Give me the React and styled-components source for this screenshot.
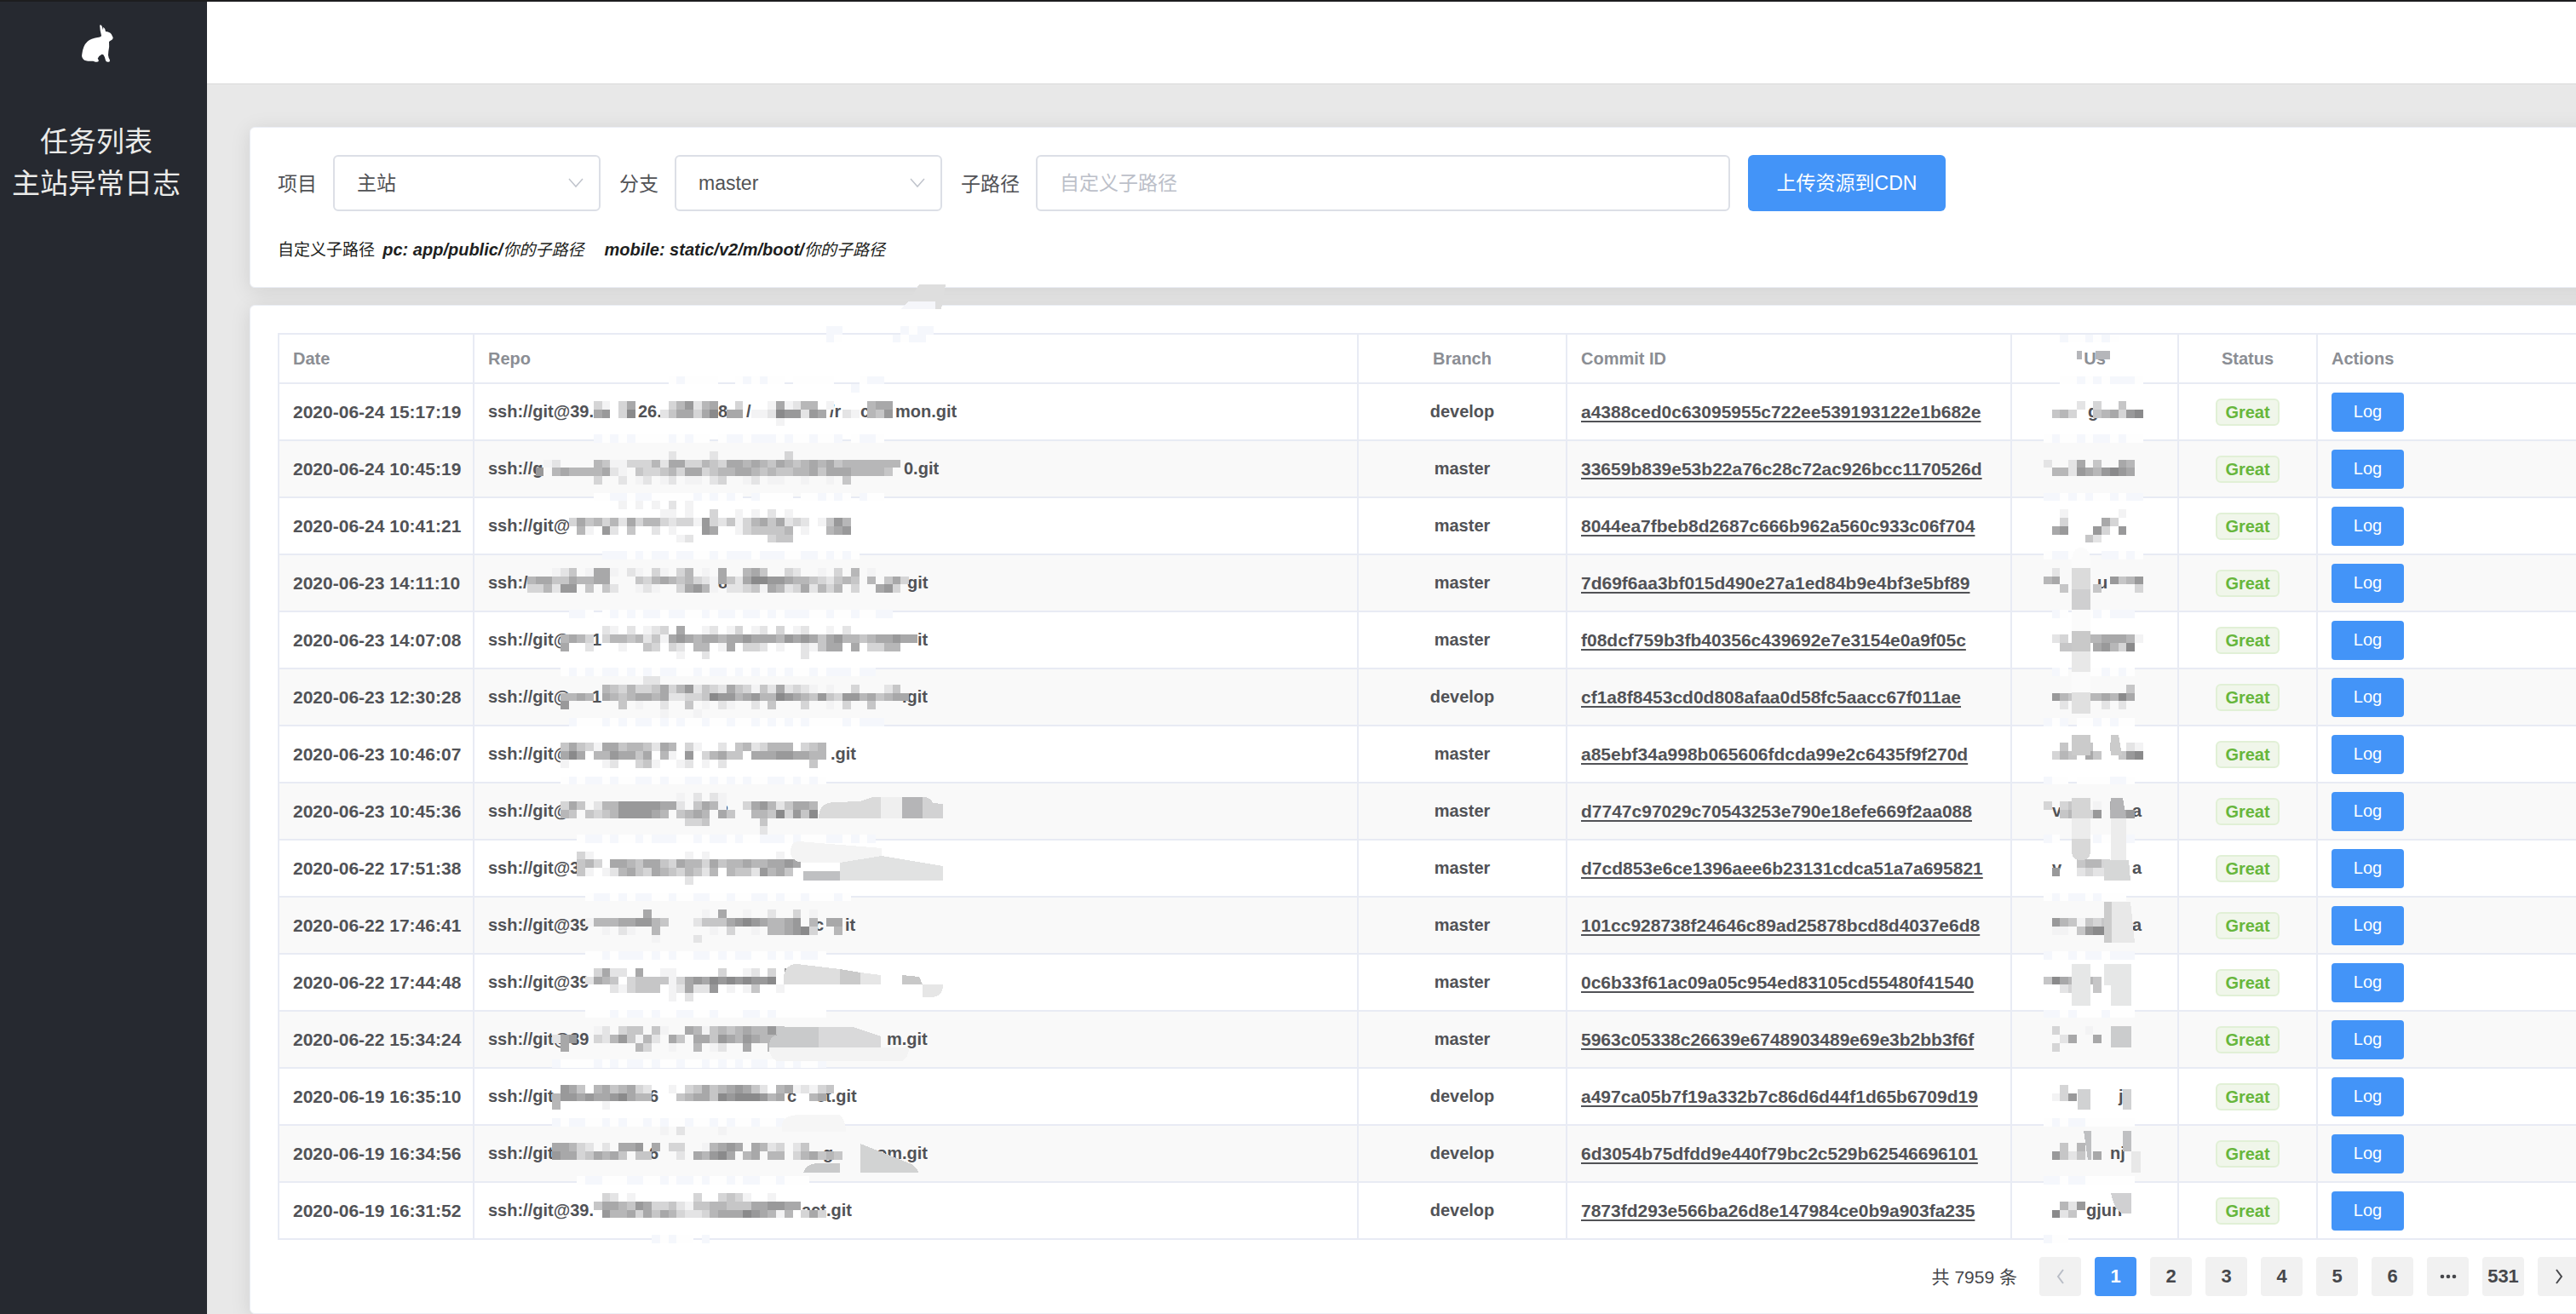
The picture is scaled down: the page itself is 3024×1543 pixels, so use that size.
import styled, { createGlobalStyle } from "styled-components";

const GlobalStyle = createGlobalStyle`
  * {
    box-sizing: border-box;
  }
  body {
    margin: 0;
    overflow-x: hidden;
    background: #e8e8e8;
    font-family: "Liberation Sans", "Noto Sans CJK SC", sans-serif;
    font-size: 20px;
    color: #515256;
  }
  button, input, select {
    font-family: inherit;
  }
`;

const Page = styled.div`
  display: flex;
  width: calc(100% + 90px);
  min-height: 100vh;
  border-top: 2px solid #1d1d1f;
`;

const Sidebar = styled.aside`
  flex: 0 0 243px;
  padding: 20px 17px 0 0;
  background: #262930;
  display: flex;
  flex-direction: column;
  align-items: center;
`;

const Menu = styled.nav`
  margin-top: 64px;
  display: flex;
  flex-direction: column;
  align-items: center;
`;

const MenuLink = styled.a`
  font-size: 33px;
  line-height: 49px;
  color: #ebebe9;
  text-decoration: none;
  white-space: nowrap;
`;

const Content = styled.div`
  flex: 1;
  min-width: 0;
`;

const Header = styled.header`
  height: 97px;
  background: #fff;
  border-bottom: 1px solid #d9d9d9;
`;

const Main = styled.main`
  padding: 50px 50px 0;
  display: flex;
  flex-direction: column;
  gap: 20px;
`;

const Card = styled.section`
  padding: 32px 32px ${(p) => p.$bottom}px;
  background: #fff;
  border: 1px solid #ebeef5;
  border-radius: 6px;
  box-shadow: 0 4px 24px rgba(0, 0, 0, 0.1);
`;

const Form = styled.form`
  display: flex;
  align-items: center;
`;

const Label = styled.label`
  margin-right: 19px;
  padding-bottom: 2px;
  font-size: 23px;
  white-space: nowrap;
`;

const SelectBox = styled.div`
  position: relative;
  width: 314px;
  margin-right: 22px;
`;

const Select = styled.select`
  appearance: none;
  width: 100%;
  height: 66px;
  padding: 0 26px;
  border: 2px solid #dcdfe6;
  border-radius: 6px;
  background: #fff;
  font-size: 23px;
  color: #515256;
`;

const Arrow = styled.svg`
  position: absolute;
  right: 18px;
  top: 26px;
  pointer-events: none;
`;

const PathInput = styled.input`
  width: 815px;
  height: 66px;
  margin-right: 21px;
  padding: 0 26px;
  border: 2px solid #dcdfe6;
  border-radius: 6px;
  font-size: 23px;
  &::placeholder {
    color: #bcc0c9;
  }
`;

const UploadButton = styled.button`
  width: 232px;
  height: 66px;
  padding: 0 0 4px;
  border: 0;
  border-radius: 6px;
  background: #4394f8;
  color: #fff;
  font-size: 23px;
`;

const Hint = styled.p`
  margin: 33px 0 0;
  font-size: 19px;
  line-height: 24px;
  color: #1d1e20;
  em {
    margin: 0 20px 0 4px;
  }
  b {
    font-size: 20px;
  }
`;

const TableWrap = styled.div`
  position: relative;
`;

const Table = styled.table`
  width: 100%;
  table-layout: fixed;
  border-collapse: separate;
  border-spacing: 0;
  border: solid #e8ebf4;
  border-width: 2px 0 0 2px;
`;

const Th = styled.th`
  width: ${(p) => p.$w};
  height: 58px;
  padding: 0 16px;
  border: solid #e8ebf4;
  border-width: 0 2px 2px 0;
  text-align: ${(p) => p.$align || "left"};
  color: #8b8e94;
`;

const Row = styled.tr`
  background: ${(p) => (p.$striped ? "#f9f9f9" : "#fff")};
`;

const Td = styled.td`
  height: 67px;
  padding: 0 16px;
  border: solid #e8ebf4;
  border-width: 0 2px 2px 0;
  text-align: ${(p) => p.$align || "left"};
  font-weight: bold;
  white-space: nowrap;
`;

const Parts = styled.div`
  display: flex;
`;

const Part = styled.span`
  flex: 0 0 ${(p) => (p.$w ? `${p.$w}px` : "auto")};
`;

const Mono = styled.span`
  font-size: 21px;
`;

const Commit = styled.a`
  font-size: 21px;
  color: inherit;
  text-underline-offset: 3px;
`;

const Tag = styled.span`
  display: inline-block;
  padding: 0 9px;
  border: 2px solid #e1f0d6;
  border-radius: 6px;
  background: #f0f6ea;
  line-height: 28px;
  color: #67b63c;
`;

const LogButton = styled.button`
  display: block;
  width: 85px;
  height: 46px;
  border: 0;
  border-radius: 4px;
  background: #4394f8;
  color: #fff;
  font-size: 20px;
`;

const Pixels = styled.svg`
  position: absolute;
  top: 0;
  ${(p) => (p.$right ? `right: ${p.$right}px;` : `left: ${p.$left}px;`)}
  pointer-events: none;
`;

const Pagination = styled.div`
  margin-top: 20px;
  padding-right: 3px;
  display: flex;
  justify-content: flex-end;
  align-items: center;
  gap: 16px;
`;

const Total = styled.span`
  margin-right: 10px;
  padding-bottom: 2px;
  font-size: 21px;
  color: #46474b;
`;

const PageButton = styled.button`
  width: 49px;
  height: 46px;
  padding: 0;
  display: flex;
  align-items: center;
  justify-content: center;
  border: 0;
  border-radius: 4px;
  background: ${(p) => (p.$active ? "#4394f8" : "#f1f1f1")};
  color: ${(p) => (p.$active ? "#fff" : "#46474b")};
  font-size: 22px;
  font-weight: bold;
`;

// repo and user are lists of [text, width], the width leaves room for masked parts
const rows = [
  { date: "2020-06-24 15:17:19", repo: [["ssh://git@39.", 176], ["26.", 94], ["8", 33], ["/", 98], ["/r", 36], ["c", 41], ["mon.git"]], branch: "develop", commit: "a4388ced0c63095955c722ee539193122e1b682e", user: [["", 73], ["g"]] },
  { date: "2020-06-24 10:45:19", repo: [["ssh://g", 488], ["0.git"]], branch: "master", commit: "33659b839e53b22a76c28c72ac926bcc1170526d", user: [] },
  { date: "2020-06-24 10:41:21", repo: [["ssh://git@"]], branch: "master", commit: "8044ea7fbeb8d2687c666b962a560c933c06f704", user: [] },
  { date: "2020-06-23 14:11:10", repo: [["ssh:/", 270], ["8", 222], ["git"]], branch: "master", commit: "7d69f6aa3bf015d490e27a1ed84b9e4bf3e5bf89", user: [["", 84], ["u"]] },
  { date: "2020-06-23 14:07:08", repo: [["ssh://git@", 122], ["1", 382], ["it"]], branch: "master", commit: "f08dcf759b3fb40356c439692e7e3154e0a9f05c", user: [] },
  { date: "2020-06-23 12:30:28", repo: [["ssh://git@", 122], ["1", 364], [".git"]], branch: "develop", commit: "cf1a8f8453cd0d808afaa0d58fc5aacc67f011ae", user: [] },
  { date: "2020-06-23 10:46:07", repo: [["ssh://git@", 402], [".git"]], branch: "master", commit: "a85ebf34a998b065606fdcda99e2c6435f9f270d", user: [] },
  { date: "2020-06-23 10:45:36", repo: [["ssh://git@", 270], ["?"]], branch: "master", commit: "d7747c97029c70543253e790e18efe669f2aa088", user: [["", 31], ["v", 94], ["a"]] },
  { date: "2020-06-22 17:51:38", repo: [["ssh://git@3"]], branch: "master", commit: "d7cd853e6ce1396aee6b23131cdca51a7a695821", user: [["", 31], ["v", 94], ["a"]] },
  { date: "2020-06-22 17:46:41", repo: [["ssh://git@39", 383], ["c", 36], ["it"]], branch: "master", commit: "101cc928738f24646c89ad25878bcd8d4037e6d8", user: [["", 125], ["a"]] },
  { date: "2020-06-22 17:44:48", repo: [["ssh://git@39"]], branch: "master", commit: "0c6b33f61ac09a05c954ed83105cd55480f41540", user: [] },
  { date: "2020-06-22 15:34:24", repo: [["ssh://git@39", 468], ["m.git"]], branch: "master", commit: "5963c05338c26639e6748903489e69e3b2bb3f6f", user: [] },
  { date: "2020-06-19 16:35:10", repo: [["ssh://git", 189], ["6", 162], ["c", 34], ["ct.git"]], branch: "develop", commit: "a497ca05b7f19a332b7c86d6d44f1d65b6709d19", user: [["", 109], ["j"]] },
  { date: "2020-06-19 16:34:56", repo: [["ssh://git", 189], ["6", 204], ["g", 63], ["om.git"]], branch: "develop", commit: "6d3054b75dfdd9e440f79bc2c529b62546696101", user: [["", 99], ["nj"]] },
  { date: "2020-06-19 16:31:52", repo: [["ssh://git@39.", 368], ["act.git"]], branch: "develop", commit: "7873fd293e566ba26d8e147984ce0b9a903fa235", user: [["", 71], ["gjun"]] },
];

// [row, column, cells]: 1-9 is how dark a cell is, w white, h pale blue, . clear
const repoPixels = [
  [-9, 36, "hh.......hwhh"],
  [-8, 36, "hw......hwhh"],
  [-3, 17, "whwwww..whwhww.wwwww...whh"],
  [-2, 39, "h"],
  [0, 8, "31.36....357256..3...161255.1....566"],
  [1, 8, "67.38...2466368.66.112877276..21.547"],
  [2, 30, "1"],
  [4, 8, "hwhwhwwwwhwhww.whhwhhhwhwwhwwh.whhw"],
  [6, 17, "2....2........3"],
  [7, 2, "12....5411333526633543665654654565645555555"],
  [8, 1, "7.565555621.4334536634556654544556466655554"],
  [9, 8, "3..2.12.12.11.23..12.11..1..1.4"],
  [11, 8, "wwhhwhhwwwwwhwhwhw.hwwww.wwhwhw.hww"],
  [12, 11, "1.1.1.2.1"],
  [13, 16, "11.1..3..1.1.2.1"],
  [14, 5, "36453526355323317324135646232.1475"],
  [15, 5, ".51.72.4..2.1...76..1344445.1..567"],
  [16, 18, "12.........344"],
  [18, 9, "hhhwhwhhwhhwwhwhhhwhhhwwhhwhwhw"],
  [20, 3, "124.1661.21.31.35.1.6..564..32..1.3.5.1"],
  [21, 0, "5664465566...435654532164268877655432454.5.463"],
  [22, 0, "335277.4.42..121..36751.22341652362535.3..673"],
  [25, 5, "hhw.whwhwhhwhhwwhwhhwhhwhwhhhwwhwwhwwhh"],
  [27, 9, "21.2.123.6..12.13.12.3.12..1.2"],
  [28, 4, "5653.35545241676566566766657676467554566766"],
  [29, 4, "6..2...1..43.32.55.16.332.1..21466.6.3355"],
  [30, 18, "1..2...........2"],
  [32, 4, "whwhwhhwhwhwhhwwhwhhwhwhwhwhwwhwhhhwhh"],
  [33, 14, "22"],
  [34, 9, "54353346357243264314262321.1..3...24"],
  [35, 4, "5565.6545665622334877567558765474377564566"],
  [36, 4, "7......4.1..2..4.1.21..2.4...3..1.3..4"],
  [37, 16, "1...1"],
  [38, 5, "hwwwhwhwhhwhwhwwhwwhwwhwhwhwhwwwwhwhhh"],
  [41, 4, "46431664554265.31..2.4523555.345"],
  [42, 4, "686.5576646.51.7.35644.666776655"],
  [43, 4, "1....12..341..12.1.2..........4"],
  [45, 4, "whwhhwhwwhhwhwwhhwhwhwhwwhhwhwhw"],
  [47, 18, "1.2.21"],
  [48, 4, "364.25577777662.4651..367524665"],
  [49, 4, "54.4345777765.4565.64..55483748"],
  [50, 19, "334......4"],
  [51, 28, "2"],
  [52, 6, "whhwhwwhwhhhwwhwhhwhwwhhhwhwwwhhwhwh"],
  [54, 6, "31...........1.1........1...3.3"],
  [55, 6, "453.66546643655364556556676"],
  [56, 6, "41.12564365435425.54427564."],
  [57, 19, "2"],
  [59, 7, "whhwhwhhwwhwwhhwwhwwhhwhwwhwwwhw"],
  [61, 14, "6......1.6..1..2..3.1"],
  [62, 7, "1555667754...2444678765567.5.66"],
  [63, 9, "1.21..5......1.3..1.556783..5"],
  [64, 15, "1....2"],
  [66, 7, "wwhwhhhwhwhwwhhwhwhhwwhwhwhhw"],
  [68, 8, "3622.6..11.....3..12.3.721.4"],
  [69, 7, "2654.344441367687878778."],
  [70, 10, "213444.126227.1.14..1"],
  [71, 17, "1.2"],
  [73, 7, "wwwhwhhwhwwhhwwhwwwhhwhwwwwww"],
  [75, 8, "12.344.41..651454565574"],
  [76, 3, "267..32574152.64.664765765566"],
  [77, 4, "6........53..1..5.12..6..5.5"],
  [79, 3, "hwwwwhwhwhhwhwwhwwhwhwhwhhwhwhwwh"],
  [82, 4, "764.5645632..1.3464567642.5612134"],
  [83, 3, "577676678655...4566487888756...56"],
  [84, 3, "5.....1"],
  [86, 3, "hwhhwwhwhwwhwhwwhwwhwhwwhwwhwhwwh"],
  [87, 16, "1.2....1"],
  [89, 3, "66532.2.667.6.33..15676.6523.24"],
  [90, 3, "766346564.44...2.65786.56.55.356454"],
  [93, 6, "whhwwwhhwwhwhhwhwwhwhhwwhwww"],
  [95, 9, "32.1.......3..3431..1"],
  [96, 8, "4665476334214455444667766"],
  [97, 9, "75563646532235666876515.363"],
  [100, 15, "hwhww.h"],
];

const userPixels = [
  [-8, 2, "hwwhwhw"],
  [-3, 2, "wwhwhwhhhw"],
  [0, 4, "2.3..4"],
  [1, 1, "453..456378"],
  [4, 0, "whwwhwhhwhww"],
  [7, 0, "2..26.4..65"],
  [8, 1, "5527657876"],
  [11, 0, "hhwhwhwwhwhh"],
  [13, 2, "1......1"],
  [14, 2, "3....63"],
  [15, 1, "67...73.7"],
  [16, 5, "42"],
  [18, 0, "whhww..hhwhw"],
  [20, 1, "2"],
  [21, 0, "56......7457"],
  [22, 2, "4...4....3"],
  [25, 1, "hw.wwhwhhh"],
  [28, 1, "23..5566651"],
  [29, 2, "44..67538"],
  [32, 1, "hw..wwhwhw"],
  [34, 10, "4"],
  [35, 1, "7545556586"],
  [36, 2, "2....2.2"],
  [38, 0, "hwh.wwhwhww"],
  [41, 2, "4..4..4.21"],
  [42, 1, "354.64..478"],
  [45, 0, "hww.wwwwhhw"],
  [48, 0, "3.34..1.6"],
  [49, 2, "45.37.567"],
  [52, 0, "hw..hwhwwhh"],
  [55, 4, "4553"],
  [56, 1, "7..2322"],
  [59, 0, "whwhhwhwww"],
  [62, 1, "7541434"],
  [63, 1, "11.4788"],
  [66, 0, "hwwhwhhwhhh"],
  [69, 0, "4865.54"],
  [70, 2, "23..4"],
  [73, 0, "hhwhwwwhwww"],
  [75, 1, "3...1"],
  [76, 2, "26..6"],
  [77, 1, "3"],
  [82, 2, "3"],
  [83, 1, "137"],
  [86, 0, "whwhhwwwwww"],
  [89, 2, "4.5"],
  [90, 1, "742416"],
  [93, 0, "hhwhhwwwwww"],
  [96, 2, "527"],
  [97, 1, "824"],
  [100, 0, "hww"],
];

// smudges left by a wide brush, as [path, colour]
const repoSmudges = [
  ["M753-57h31l-5 29h-7v-9h-31z", "#dedede"],
  ["M741-37h31v9h-41z", "#f5f6fa"],
  ["M635 570q0-19 19-19l30-1 14-5h10v25z", "#dadada"],
  ["M708 545h25v25h-25z", "#efefef"],
  ["M733 545h24v25h-24z", "#b5b5b7"],
  ["M757 545q10 0 12 7l12 1v17h-24z", "#d2d2d3"],
  ["M612 597q-10 0-10 13 0 10 15 12h92v-17z", "#f4f4f4"],
  ["M660 622l49-8 72 12v17H660z", "#e1e2e2"],
  ["M617 632h43v11h-43z", "#bfc0c2"],
  ["M594 765q-2-24 16-24l50 6v18z", "#dedede"],
  ["M660 747l24 4v14h-24z", "#cacaca"],
  ["M684 751l24 3v11h-24z", "#e6e6e6"],
  ["M733 754l20 2 4 9h-24z", "#c8c8c8"],
  ["M757 765h24q0 15-14 15h-10z", "#e6e6e6"],
  ["M586 815h90l32 11v13H577q0-14 9-14z", "#c9cacb"],
  ["M635 815h41l32 11v13h-73z", "#d9d9da"],
  ["M577 839h164q0 12-8 16H586q-9-4-9-16z", "#f3f3f3"],
  ["M592 931q0-12 20-13h48q7 8 7 20h-75z", "#f6f6f6"],
  ["M684 952l60 24q8 6 8 10h-68z", "#d2d3d3"],
  ["M635 975h25v11h-43q4-11 18-11z", "#c9cacb"],
];

const userSmudges = [
  ["M67 270q0-18 11-18t11 18v160H67z", "#fbfbfb"],
  ["M67 276h22v25H67z", "#dbdbdb"],
  ["M67 301h22v24H67z", "#cfcfd0"],
  ["M67 350h22v24H67z", "#c9c9c9"],
  ["M67 374h22v24H67z", "#e8e8e8"],
  ["M67 422h22v25H67z", "#e0e0e0"],
  ["M67 472h22v24H67zM113 472h9l4 24h-13z", "#cbcbcb"],
  ["M67 546h22v24H67z", "#d5d5d5"],
  ["M67 570h22v24H67zM113 570h18v49h-18z", "#ececec"],
  ["M67 594h22v14q0 11-11 11t-11-11z", "#d8d8d8"],
  ["M113 546h14l4 24h-18z", "#b3b3b5"],
  ["M105 619h29l2 24h-31z", "#d6d7d7"],
  ["M105 668h9v48h-9z", "#cccccc"],
  ["M114 668h22l5 48h-27z", "#e8e8e8"],
  ["M67 741h22v49H67zM105 741h32v49h-24v-24h-8z", "#e6e7e7"],
  ["M113 814h24v25h-24z", "#cbcccd"],
  ["M74 888h15v24H74zM127 888h10v24h-10z", "#d1d2d3"],
  ["M81 937h9v34h-4zM127 937h10v24h-10z", "#bfc0c2"],
  ["M137 961h11v25h-11z", "#e8e8e8"],
  ["M113 1010h24v24h-10q-10-4-14-24z", "#d0d0d2"],
  ["M95 21h17v10H95zM73 21h6v10h-6z", "#b5b6ba"],
];

const CELL_W = 9.74;
const CELL_H = 9.79;

function cellColour(c) {
  if (c === "w") return "#fefefe";
  if (c === "h") return "#f5f7fc";
  const v = 258 - Number(c) * 15;
  return `rgb(${v},${v},${v + 1})`;
}

function PixelCells({ data, x }) {
  return data.map(([r, c, cells]) =>
    [...cells].map((ch, i) =>
      ch === "." ? null : (
        <rect
          key={`${r}-${i}`}
          x={x + (c + i) * CELL_W}
          y={80 + r * CELL_H}
          width={CELL_W}
          height={CELL_H}
          fill={cellColour(ch)}
        />
      )
    )
  );
}

function Smudges({ data }) {
  return data.map(([d, fill]) => <path key={d} d={d} fill={fill} />);
}

function Rabbit() {
  return (
    <svg width="56" height="56" viewBox="0 0 168 168" fill="#fff" aria-hidden="true">
      <path d="M96 24q4-6 8 2l4 14 1-11q6 4 8 16 14 1 20 9l6 12q0 8-9 11l-5 4q2 20-2 34l-1 13q1 9 5 15 3 9-4 9-9 1-10-5-2-12-8-20l-5-2-10 7-5 8q5 5 3 10-2 3-11 2l-8-3q-27 2-34-6-8-7-5-19 3-29 19-44 13-11 35-14 13-1 14-7-5-18-6-39z" />
    </svg>
  );
}

function Chevron() {
  return (
    <Arrow width="22" height="14" viewBox="0 0 22 14" fill="none" stroke="#c0c4cc" strokeWidth="1.5">
      <path d="M3 2l8 9 8-9" />
    </Arrow>
  );
}

function PagerArrow({ d, stroke }) {
  return (
    <svg width="12" height="18" viewBox="0 0 12 18" fill="none" stroke={stroke} strokeWidth="2">
      <path d={d} />
    </svg>
  );
}

function Filters() {
  return (
    <Card $bottom={31}>
      <Form onSubmit={(e) => e.preventDefault()}>
        <Label htmlFor="project">项目</Label>
        <SelectBox>
          <Select id="project">
            <option>主站</option>
          </Select>
          <Chevron />
        </SelectBox>
        <Label htmlFor="branch">分支</Label>
        <SelectBox>
          <Select id="branch">
            <option>master</option>
            <option>develop</option>
          </Select>
          <Chevron />
        </SelectBox>
        <Label htmlFor="subpath">子路径</Label>
        <PathInput id="subpath" placeholder="自定义子路径" />
        <UploadButton type="submit">上传资源到CDN</UploadButton>
      </Form>
      <Hint>
        自定义子路径 <em><b>pc: app/public/</b>你的子路径</em>
        <em><b>mobile: static/v2/m/boot/</b>你的子路径</em>
      </Hint>
    </Card>
  );
}

function TaskTable() {
  return (
    <TableWrap>
      <Table>
        <thead>
          <tr>
            <Th $w="229px">Date</Th>
            <Th>Repo</Th>
            <Th $w="245px" $align="center">Branch</Th>
            <Th $w="522px">Commit ID</Th>
            <Th $w="196px" $align="center">Us</Th>
            <Th $w="163px" $align="center">Status</Th>
            <Th $w="310px">Actions</Th>
          </tr>
        </thead>
        <tbody>
          {rows.map((row, i) => (
            <Row key={row.date} $striped={i % 2 === 1}>
              <Td><Mono>{row.date}</Mono></Td>
              <Td>
                <Parts>
                  {row.repo.map(([text, w], j) => <Part key={j} $w={w}>{text}</Part>)}
                </Parts>
              </Td>
              <Td $align="center">{row.branch}</Td>
              <Td><Commit href="#">{row.commit}</Commit></Td>
              <Td>
                <Parts>
                  {row.user.map(([text, w], j) => <Part key={j} $w={w}>{text}</Part>)}
                </Parts>
              </Td>
              <Td $align="center"><Tag>Great</Tag></Td>
              <Td><LogButton type="button">Log</LogButton></Td>
            </Row>
          ))}
        </tbody>
      </Table>
      <Pixels $left={250} width="560" height="1080" viewBox="250 0 560 1080" overflow="visible" shapeRendering="crispEdges">
        <PixelCells data={repoPixels} x={293} />
        <Smudges data={repoSmudges} />
      </Pixels>
      <Pixels $right={476} width="190" height="1080" overflow="visible" shapeRendering="crispEdges">
        <PixelCells data={userPixels} x={34} />
        <Smudges data={userSmudges} />
      </Pixels>
    </TableWrap>
  );
}

function Pager() {
  return (
    <Pagination>
      <Total>共 7959 条</Total>
      <PageButton type="button" aria-label="prev"><PagerArrow d="M9 1L3 9l6 8" stroke="#b9bdc6" /></PageButton>
      {["1", "2", "3", "4", "5", "6", "•••", "531"].map((n) => (
        <PageButton key={n} type="button" $active={n === "1"}>
          {n === "•••" ? (
            <svg width="20" height="6" fill="#46474b" aria-hidden="true">
              <circle cx="3" cy="3" r="2.3" />
              <circle cx="10" cy="3" r="2.3" />
              <circle cx="17" cy="3" r="2.3" />
            </svg>
          ) : n}
        </PageButton>
      ))}
      <PageButton type="button" aria-label="next"><PagerArrow d="M3 1l6 8-6 8" stroke="#46474b" /></PageButton>
    </Pagination>
  );
}

export default function App() {
  return (
    <>
      <GlobalStyle />
      <Page>
        <Sidebar>
          <Rabbit />
          <Menu>
            <MenuLink href="#tasks">任务列表</MenuLink>
            <MenuLink href="#errors">主站异常日志</MenuLink>
          </Menu>
        </Sidebar>
        <Content>
          <Header />
          <Main>
            <Filters />
            <Card $bottom={20}>
              <TaskTable />
              <Pager />
            </Card>
          </Main>
        </Content>
      </Page>
    </>
  );
}
